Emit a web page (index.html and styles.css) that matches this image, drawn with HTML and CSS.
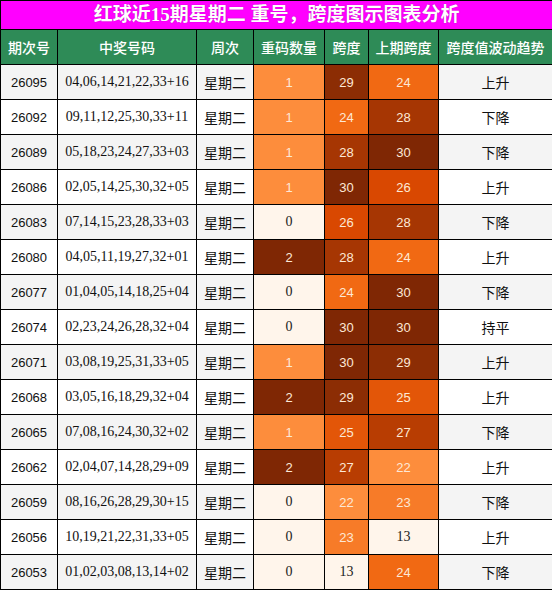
FILE: index.html
```html
<!DOCTYPE html>
<html lang="zh">
<head>
<meta charset="utf-8">
<link rel="stylesheet" href="styles.css">
</head>
<body>
<table class="chart">
  <colgroup>
    <col class="c1"><col class="c2"><col class="c3"><col class="c4"><col class="c5"><col class="c6"><col class="c7">
  </colgroup>
  <thead>
    <tr class="title-row"><th colspan="7">红球近15期星期二 重号，跨度图示图表分析</th></tr>
    <tr class="head-row">
      <th>期次号</th><th>中奖号码</th><th>周次</th><th>重码数量</th><th>跨度</th><th>上期跨度</th><th>跨度值波动趋势</th>
    </tr>
  </thead>
  <tbody>
    <tr class="odd"><td class="num">26095</td><td class="balls">04,06,14,21,22,33+16</td><td class="cjk">星期二</td><td class="h h1">1</td><td class="h h29">29</td><td class="h h24">24</td><td class="cjk">上升</td></tr>
    <tr><td class="num">26092</td><td class="balls">09,11,12,25,30,33+11</td><td class="cjk">星期二</td><td class="h h1">1</td><td class="h h24">24</td><td class="h h28">28</td><td class="cjk">下降</td></tr>
    <tr class="odd"><td class="num">26089</td><td class="balls">05,18,23,24,27,33+03</td><td class="cjk">星期二</td><td class="h h1">1</td><td class="h h28">28</td><td class="h h30">30</td><td class="cjk">下降</td></tr>
    <tr><td class="num">26086</td><td class="balls">02,05,14,25,30,32+05</td><td class="cjk">星期二</td><td class="h h1">1</td><td class="h h30">30</td><td class="h h26">26</td><td class="cjk">上升</td></tr>
    <tr class="odd"><td class="num">26083</td><td class="balls">07,14,15,23,28,33+03</td><td class="cjk">星期二</td><td class="h h0">0</td><td class="h h26">26</td><td class="h h28">28</td><td class="cjk">下降</td></tr>
    <tr><td class="num">26080</td><td class="balls">04,05,11,19,27,32+01</td><td class="cjk">星期二</td><td class="h h2">2</td><td class="h h28">28</td><td class="h h24">24</td><td class="cjk">上升</td></tr>
    <tr class="odd"><td class="num">26077</td><td class="balls">01,04,05,14,18,25+04</td><td class="cjk">星期二</td><td class="h h0">0</td><td class="h h24">24</td><td class="h h30">30</td><td class="cjk">下降</td></tr>
    <tr><td class="num">26074</td><td class="balls">02,23,24,26,28,32+04</td><td class="cjk">星期二</td><td class="h h0">0</td><td class="h h30">30</td><td class="h h30">30</td><td class="cjk">持平</td></tr>
    <tr class="odd"><td class="num">26071</td><td class="balls">03,08,19,25,31,33+05</td><td class="cjk">星期二</td><td class="h h1">1</td><td class="h h30">30</td><td class="h h29">29</td><td class="cjk">上升</td></tr>
    <tr><td class="num">26068</td><td class="balls">03,05,16,18,29,32+04</td><td class="cjk">星期二</td><td class="h h2">2</td><td class="h h29">29</td><td class="h h25">25</td><td class="cjk">上升</td></tr>
    <tr class="odd"><td class="num">26065</td><td class="balls">07,08,16,24,30,32+02</td><td class="cjk">星期二</td><td class="h h1">1</td><td class="h h25">25</td><td class="h h27">27</td><td class="cjk">下降</td></tr>
    <tr><td class="num">26062</td><td class="balls">02,04,07,14,28,29+09</td><td class="cjk">星期二</td><td class="h h2">2</td><td class="h h27">27</td><td class="h h22">22</td><td class="cjk">上升</td></tr>
    <tr class="odd"><td class="num">26059</td><td class="balls">08,16,26,28,29,30+15</td><td class="cjk">星期二</td><td class="h h0">0</td><td class="h h22">22</td><td class="h h23">23</td><td class="cjk">下降</td></tr>
    <tr><td class="num">26056</td><td class="balls">10,19,21,22,31,33+05</td><td class="cjk">星期二</td><td class="h h0">0</td><td class="h h23">23</td><td class="h h13">13</td><td class="cjk">上升</td></tr>
    <tr class="odd"><td class="num">26053</td><td class="balls">01,02,03,08,13,14+02</td><td class="cjk">星期二</td><td class="h h0">0</td><td class="h h13">13</td><td class="h h24">24</td><td class="cjk">下降</td></tr>
  </tbody>
</table>
</body>
</html>
```
FILE: styles.css
```css
html, body {
  margin: 0;
  padding: 0;
  background: #ffffff;
}

.chart {
  width: 552px;
  border-collapse: collapse;
  table-layout: fixed;
  font-family: "Liberation Sans", "Noto Sans CJK SC", sans-serif;
}

.c1 { width: 57px; }
.c2 { width: 139px; }
.c3 { width: 57px; }
.c4 { width: 71px; }
.c5 { width: 44px; }
.c6 { width: 70px; }
.c7 { width: 114px; }

.chart th,
.chart td {
  border: 1px solid #000000;
  padding: 0;
  text-align: center;
  vertical-align: middle;
  overflow: hidden;
  white-space: nowrap;
}

.title-row th {
  height: 28px;
  background: #ff00ff;
  color: #ffffff;
  font-family: "Liberation Serif", "Noto Sans CJK SC", serif;
  font-size: 19px;
  font-weight: bold;
  line-height: 28px;
  text-shadow: 0 0 1px rgba(80, 0, 80, 0.5);
}

.head-row th {
  height: 34px;
  background: #2e8b57;
  color: #ffffff;
  font-family: "Noto Sans CJK SC", sans-serif;
  font-size: 14px;
  font-weight: 500;
}

.chart td {
  height: 34px;
  background: #ffffff;
  color: #111111;
}

.chart tr.odd td {
  background: #f4f4f4;
}

.num {
  font-size: 13px;
  color: #222222;
}

.balls {
  font-family: "Liberation Serif", serif;
  font-size: 14px;
}

.cjk {
  font-family: "Noto Sans CJK SC", sans-serif;
  font-size: 14px;
  padding-top: 2px;
}

.chart td.h {
  font-size: 13px;
  color: #fde8d6;
}

.chart tr td.h0,
.chart tr td.h13 { background: #fff5eb; color: #222222; font-family: "Liberation Serif", serif; font-size: 14px; }
.chart tr td.h1,
.chart tr td.h22 { background: #fd8d3c; }
.chart tr td.h2,
.chart tr td.h30 { background: #7f2704; }
.chart tr td.h23 { background: #f77b28; }
.chart tr td.h24 { background: #f16913; }
.chart tr td.h25 { background: #e35608; }
.chart tr td.h26 { background: #d94801; }
.chart tr td.h27 { background: #b83d02; }
.chart tr td.h28 { background: #a63603; }
.chart tr td.h29 { background: #8c2d04; }
```
